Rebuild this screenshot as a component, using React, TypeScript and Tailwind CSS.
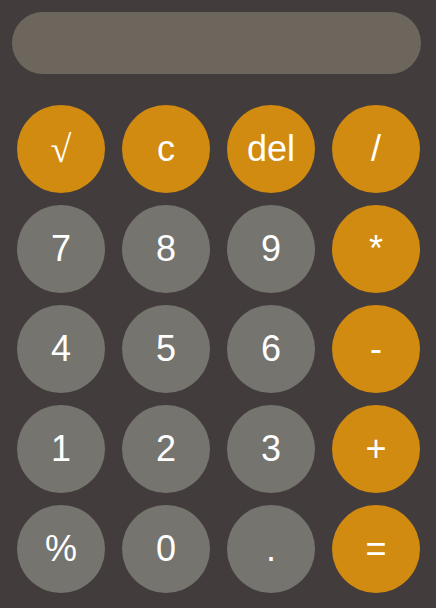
import React from 'react';

type Key = { label: string; op?: boolean };

const keys: Key[] = [
  { label: '√', op: true },
  { label: 'c', op: true },
  { label: 'del', op: true },
  { label: '/', op: true },
  { label: '7' },
  { label: '8' },
  { label: '9' },
  { label: '*', op: true },
  { label: '4' },
  { label: '5' },
  { label: '6' },
  { label: '-', op: true },
  { label: '1' },
  { label: '2' },
  { label: '3' },
  { label: '+', op: true },
  { label: '%' },
  { label: '0' },
  { label: '.' },
  { label: '=', op: true },
];

const App: React.FC = () => {
  return (
    <div
      className="w-[436px] h-[608px] bg-[#423c3c] pt-[12px] px-[12px]"
      style={{ fontFamily: '"Liberation Sans", Arial, sans-serif' }}
    >
      <div className="h-[62px] w-[409px] rounded-full bg-[#6c665d]" />
      <div className="grid grid-cols-[repeat(4,88px)] gap-x-[17px] gap-y-[12px] mt-[31px] ml-[5px]">
        {keys.map((k) => (
          <button
            key={k.label}
            className={`w-[88px] h-[88px] rounded-full flex items-center justify-center text-white text-[36px] leading-none ${
              k.op ? 'bg-[#d18b10]' : 'bg-[#75746f]'
            }`}
          >
            {k.label === '√' ? (
              <span className="font-['Liberation_Serif',serif] text-[38px]">√</span>
            ) : (
              k.label
            )}
          </button>
        ))}
      </div>
    </div>
  );
};

export default App;
